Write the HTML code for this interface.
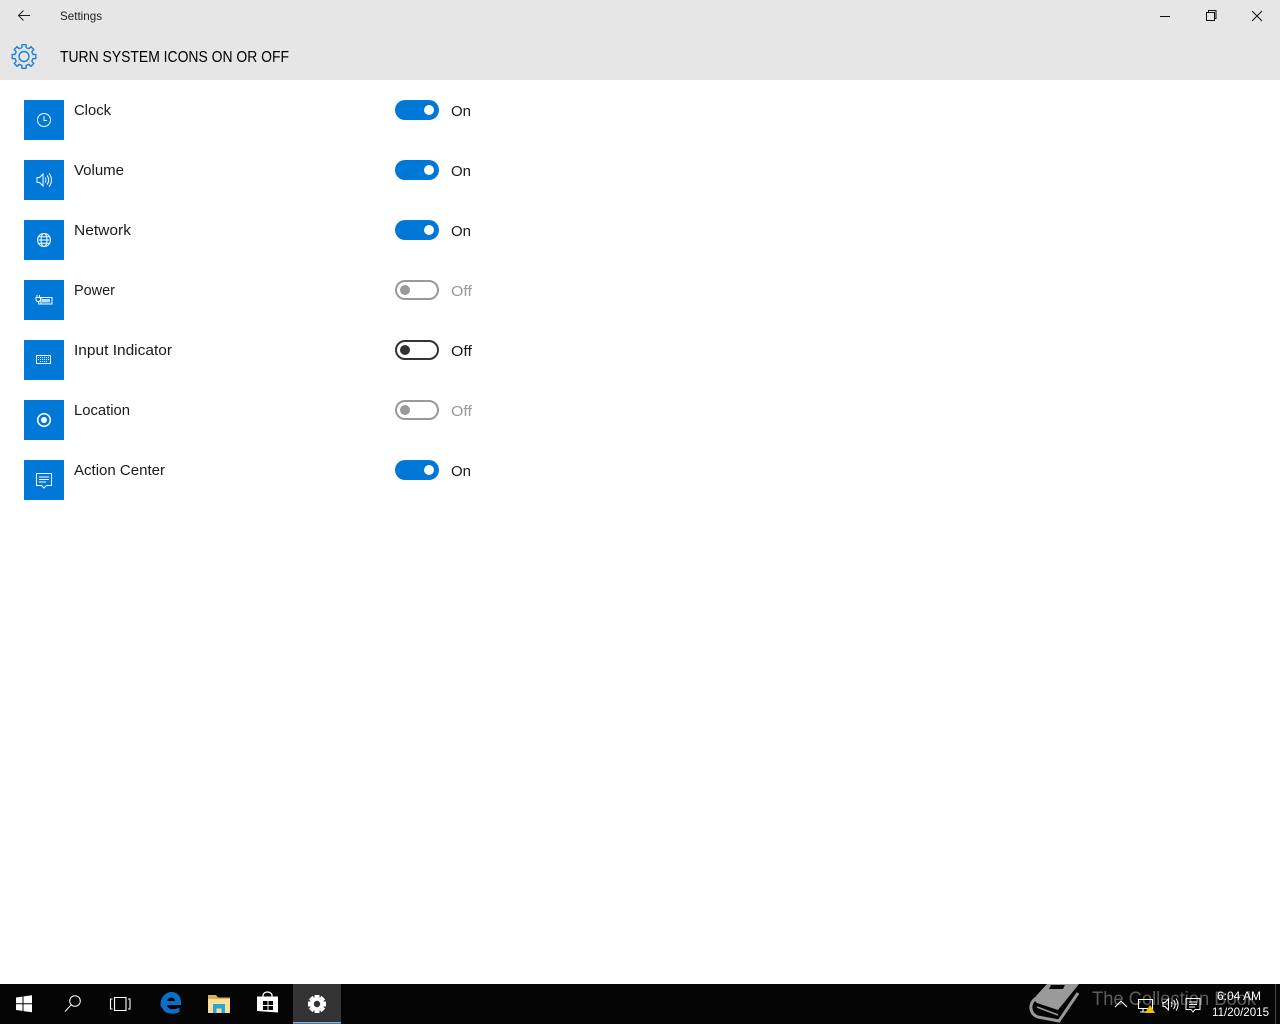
<!DOCTYPE html>
<html><head><meta charset="utf-8"><title>Settings</title>
<style>
html,body{margin:0;padding:0;background:#fff;width:1280px;height:1024px;overflow:hidden}
svg{display:block}
text{font-family:"Liberation Sans",sans-serif}
</style></head><body>
<svg width="1280" height="1024" viewBox="0 0 1280 1024" xmlns="http://www.w3.org/2000/svg">
<rect width="1280" height="1024" fill="#fff"/>
<rect width="1280" height="80" fill="#e6e6e6"/>
<!-- title bar -->
<path d="M30 15.5H18.500M23.500 10.500l-5 5 5 5" fill="none" stroke="#222" stroke-width="1"/>
<text x="60" y="20" font-size="12" fill="#222" textLength="42" lengthAdjust="spacingAndGlyphs">Settings</text>
<path d="M1160 16.500h10" stroke="#111" stroke-width="1" fill="none"/>
<path d="M1206.500 12.500h8v8h-8zM1208.500 12.500v-2h7.500v8h-2" stroke="#111" stroke-width="1" fill="none"/>
<path d="M1252 11l10 10M1262 11l-10 10" stroke="#111" stroke-width="1" fill="none"/>
<!-- gear -->
<g fill="none" stroke="#1a7fd6" stroke-width="1.400" stroke-linejoin="round" transform="translate(24 56.500)">
<path id="t" d="M-3.440-8.310L-2.070-8.960L-2.080-11.820H2.080L2.070-8.960L3.440-8.310"/>
<path d="M-3.440-8.310L-2.070-8.960L-2.080-11.820H2.080L2.070-8.960L3.440-8.310" transform="rotate(45)"/>
<path d="M-3.440-8.310L-2.070-8.960L-2.080-11.820H2.080L2.070-8.960L3.440-8.310" transform="rotate(90)"/>
<path d="M-3.440-8.310L-2.070-8.960L-2.080-11.820H2.080L2.070-8.960L3.440-8.310" transform="rotate(135)"/>
<path d="M-3.440-8.310L-2.070-8.960L-2.080-11.820H2.080L2.070-8.960L3.440-8.310" transform="rotate(180)"/>
<path d="M-3.440-8.310L-2.070-8.960L-2.080-11.820H2.080L2.070-8.960L3.440-8.310" transform="rotate(225)"/>
<path d="M-3.440-8.310L-2.070-8.960L-2.080-11.820H2.080L2.070-8.960L3.440-8.310" transform="rotate(270)"/>
<path d="M-3.440-8.310L-2.070-8.960L-2.080-11.820H2.080L2.070-8.960L3.440-8.310" transform="rotate(315)"/>
<circle r="5"/>
</g>
<text x="60" y="62" font-size="15.500" fill="#000" textLength="229" lengthAdjust="spacingAndGlyphs">TURN SYSTEM ICONS ON OR OFF</text>

<!-- tiles -->
<g fill="#0078d7">
<rect x="24" y="100" width="40" height="40"/><rect x="24" y="160" width="40" height="40"/>
<rect x="24" y="220" width="40" height="40"/><rect x="24" y="280" width="40" height="40"/>
<rect x="24" y="340" width="40" height="40"/><rect x="24" y="400" width="40" height="40"/>
<rect x="24" y="460" width="40" height="40"/>
</g>
<g fill="none" stroke="#fff" stroke-width="1">
<!-- clock -->
<circle cx="44" cy="120" r="6.500"/><path d="M44 116v4.500h3"/>
<!-- volume -->
<path d="M37 177.500h2.500l3.500-3.500v12l-3.500-3.500H37z"/><path d="M45 177.500a4 4 0 0 1 0 5M47 175.500a7 7 0 0 1 0 9M49 173.500a10 10 0 0 1 0 13"/>
<!-- globe -->
<circle cx="44" cy="240" r="6.500"/><ellipse cx="44" cy="240" rx="3" ry="6.500"/><path d="M37.500 240h13M38.500 236.700h11M38.500 243.300h11"/>
<!-- power -->
<rect x="41" y="297.500" width="11" height="6.500"/><path d="M36 297.500h4.500v2.500l-1 1.500h-2.500l-1-1.500zM37 295v2.500M39.500 295v2.500M38.500 301.500v2.500h2.500"/>
<!-- keyboard -->
<rect x="36.500" y="355.500" width="14" height="8"/><path d="M38 357.500h11M38 359.500h11M40 361.500h7" stroke-dasharray="1 1"/>
<!-- location -->
<circle cx="44" cy="420" r="6.300" stroke-width="1.500"/>
<!-- action center -->
<path d="M36.500 473.500h15v12h-5l-2.500 2.500-2.500-2.500h-5zM39 477h10M39 479.500h10M39 482h7" stroke-width="1.100"/>
</g>
<rect x="42" y="299" width="8" height="3.500" fill="#fff" opacity=".75"/>
<circle cx="44" cy="420" r="3" fill="#fff"/>

<!-- labels -->
<g font-size="15" fill="#1a1a1a">
<text x="74" y="115" textLength="37" lengthAdjust="spacingAndGlyphs">Clock</text>
<text x="74" y="175" textLength="50" lengthAdjust="spacingAndGlyphs">Volume</text>
<text x="74" y="235" textLength="57" lengthAdjust="spacingAndGlyphs">Network</text>
<text x="74" y="295" textLength="41" lengthAdjust="spacingAndGlyphs">Power</text>
<text x="74" y="355" textLength="98" lengthAdjust="spacingAndGlyphs">Input Indicator</text>
<text x="74" y="415" textLength="56" lengthAdjust="spacingAndGlyphs">Location</text>
<text x="74" y="475" textLength="91" lengthAdjust="spacingAndGlyphs">Action Center</text>
<text x="451" y="116" textLength="20" lengthAdjust="spacingAndGlyphs">On</text>
<text x="451" y="176" textLength="20" lengthAdjust="spacingAndGlyphs">On</text>
<text x="451" y="236" textLength="20" lengthAdjust="spacingAndGlyphs">On</text>
<text x="451" y="296" textLength="21" lengthAdjust="spacingAndGlyphs" fill="#999">Off</text>
<text x="451" y="356" textLength="21" lengthAdjust="spacingAndGlyphs">Off</text>
<text x="451" y="416" textLength="21" lengthAdjust="spacingAndGlyphs" fill="#999">Off</text>
<text x="451" y="476" textLength="20" lengthAdjust="spacingAndGlyphs">On</text>
</g>

<!-- toggles -->
<g fill="#0078d7">
<rect x="395" y="100" width="44" height="20" rx="10"/><rect x="395" y="160" width="44" height="20" rx="10"/>
<rect x="395" y="220" width="44" height="20" rx="10"/><rect x="395" y="460" width="44" height="20" rx="10"/>
</g>
<g fill="#fff"><circle cx="429" cy="110" r="5"/><circle cx="429" cy="170" r="5"/><circle cx="429" cy="230" r="5"/><circle cx="429" cy="470" r="5"/></g>
<g fill="none" stroke="#999" stroke-width="2"><rect x="396" y="281" width="42" height="18" rx="9"/><rect x="396" y="401" width="42" height="18" rx="9"/></g>
<rect x="396" y="341" width="42" height="18" rx="9" fill="none" stroke="#333" stroke-width="2"/>
<circle cx="405" cy="290" r="5" fill="#999"/><circle cx="405" cy="410" r="5" fill="#999"/><circle cx="405" cy="350" r="5" fill="#333"/>

<!-- taskbar -->
<rect y="984" width="1280" height="40" fill="#050505"/>
<rect x="293" y="984" width="48" height="40" fill="#333"/>
<rect x="293" y="1022" width="48" height="1.500" fill="#7fb2dc"/>
<!-- start -->
<path d="M16 997.500l6.500-.9v6.600H16zM23.500 996.400l8.500-1.200v8H23.500zM16 1004.300h6.500v6.600l-6.500-.9zM23.500 1004.300H32v8l-8.500-1.200z" fill="#fff"/>
<!-- search -->
<g fill="none" stroke="#fff" stroke-width="1"><circle cx="75" cy="1001" r="5.300"/><path d="M71 1005l-6 6.500"/></g>
<!-- task view -->
<path d="M114.500 997.500h11.500v13h-11.500zM112.500 999h-2v10h2M128 999h2v10h-2" fill="none" stroke="#fff" stroke-width="1.100"/>
<!-- edge -->
<path d="M160.500 1005c.2-9 6-13 11-13 5.500 0 9.500 4 9.500 10.500v2.500h-14c.3 4.500 6.800 5.500 12.500 2.500v4.500c-7 3.200-15 1.800-17-3.700 0 0-1.700-1.300-2-3.300zM167 1001h8c0-4.500-7-4.500-8 0z" fill="#0a6fc8" fill-rule="evenodd"/>
<!-- explorer -->
<path d="M208 995h8l2 2.500h12v3H208z" fill="#d9b44e"/>
<rect x="208" y="999" width="22" height="14" fill="#f7e19a"/>
<path d="M213 1013v-9h12v9h-3.500v-4.500h-5v4.500z" fill="#2aa5d8"/>
<!-- store -->
<path d="M257 996.500h21v16l-21-1.500z" fill="#fff"/>
<path d="M263 996.500v-1a4.500 3.500 0 0 1 9 0v1" fill="none" stroke="#fff" stroke-width="1.300"/>
<path d="M263 1001h4.500v4H263zM268.500 1001h4.500v4h-4.500zM263 1006h4.500v4H263zM268.500 1006h4.500v4h-4.500z" fill="#050505"/>
<!-- settings gear -->
<g transform="translate(317 1004)">
<g fill="#fff"><rect x="-2.500" y="-9" width="5" height="18"/><rect x="-2.500" y="-9" width="5" height="18" transform="rotate(45)"/><rect x="-2.500" y="-9" width="5" height="18" transform="rotate(90)"/><rect x="-2.500" y="-9" width="5" height="18" transform="rotate(135)"/><circle r="7"/></g>
<circle r="3.200" fill="#333"/>
</g>
<!-- watermark -->
<path d="M1047 984H1079L1058 1010L1037 1003Q1033 1000 1036 996Z" fill="#9a9a9a"/>
<path d="M1051 985h14l-2 4h-14z" fill="#050505"/>
<path d="M1036 998Q1030 1003 1031 1009Q1032 1015 1038 1017L1059 1021L1078 993" fill="none" stroke="#999" stroke-width="3"/>
<path d="M1037 1007L1058 1015" fill="none" stroke="#999" stroke-width="1.500"/>
<text x="1092" y="1005" font-size="19" fill="#5c5c5c" textLength="164" lengthAdjust="spacingAndGlyphs">The Collection Book</text>
<!-- tray -->
<path d="M1115 1007l6-6 6 6" fill="none" stroke="#fff" stroke-width="1.100"/>
<path d="M1138.500 999.500h14v9h-14zM1143 1000v-1M1140 1012h6M1143 1008.500v3" fill="none" stroke="#fff" stroke-width="1.100"/>
<path d="M1150 1005l-5 8h10z" fill="#f2c200"/>
<path d="M1163 1002.500h2l3.500-3.500v11l-3.500-3.500h-2zM1171 1002a4 4 0 0 1 0 5M1173.500 1000a7 7 0 0 1 0 9M1176 998.500a10 10 0 0 1 0 12" fill="none" stroke="#fff" stroke-width="1"/>
<path d="M1186 998.500h14v11h-5l-2 2.500-2-2.500h-5zM1189 1002h8M1189 1004.500h8M1189 1007h6" fill="none" stroke="#fff" stroke-width="1"/>
<text x="1217" y="1000" font-size="12" fill="#fff" textLength="44" lengthAdjust="spacingAndGlyphs">6:04 AM</text>
<text x="1212" y="1016" font-size="12" fill="#fff" textLength="57" lengthAdjust="spacingAndGlyphs">11/20/2015</text>
<rect x="1275" y="984" width="1" height="40" fill="#444"/>
</svg>
</body></html>
